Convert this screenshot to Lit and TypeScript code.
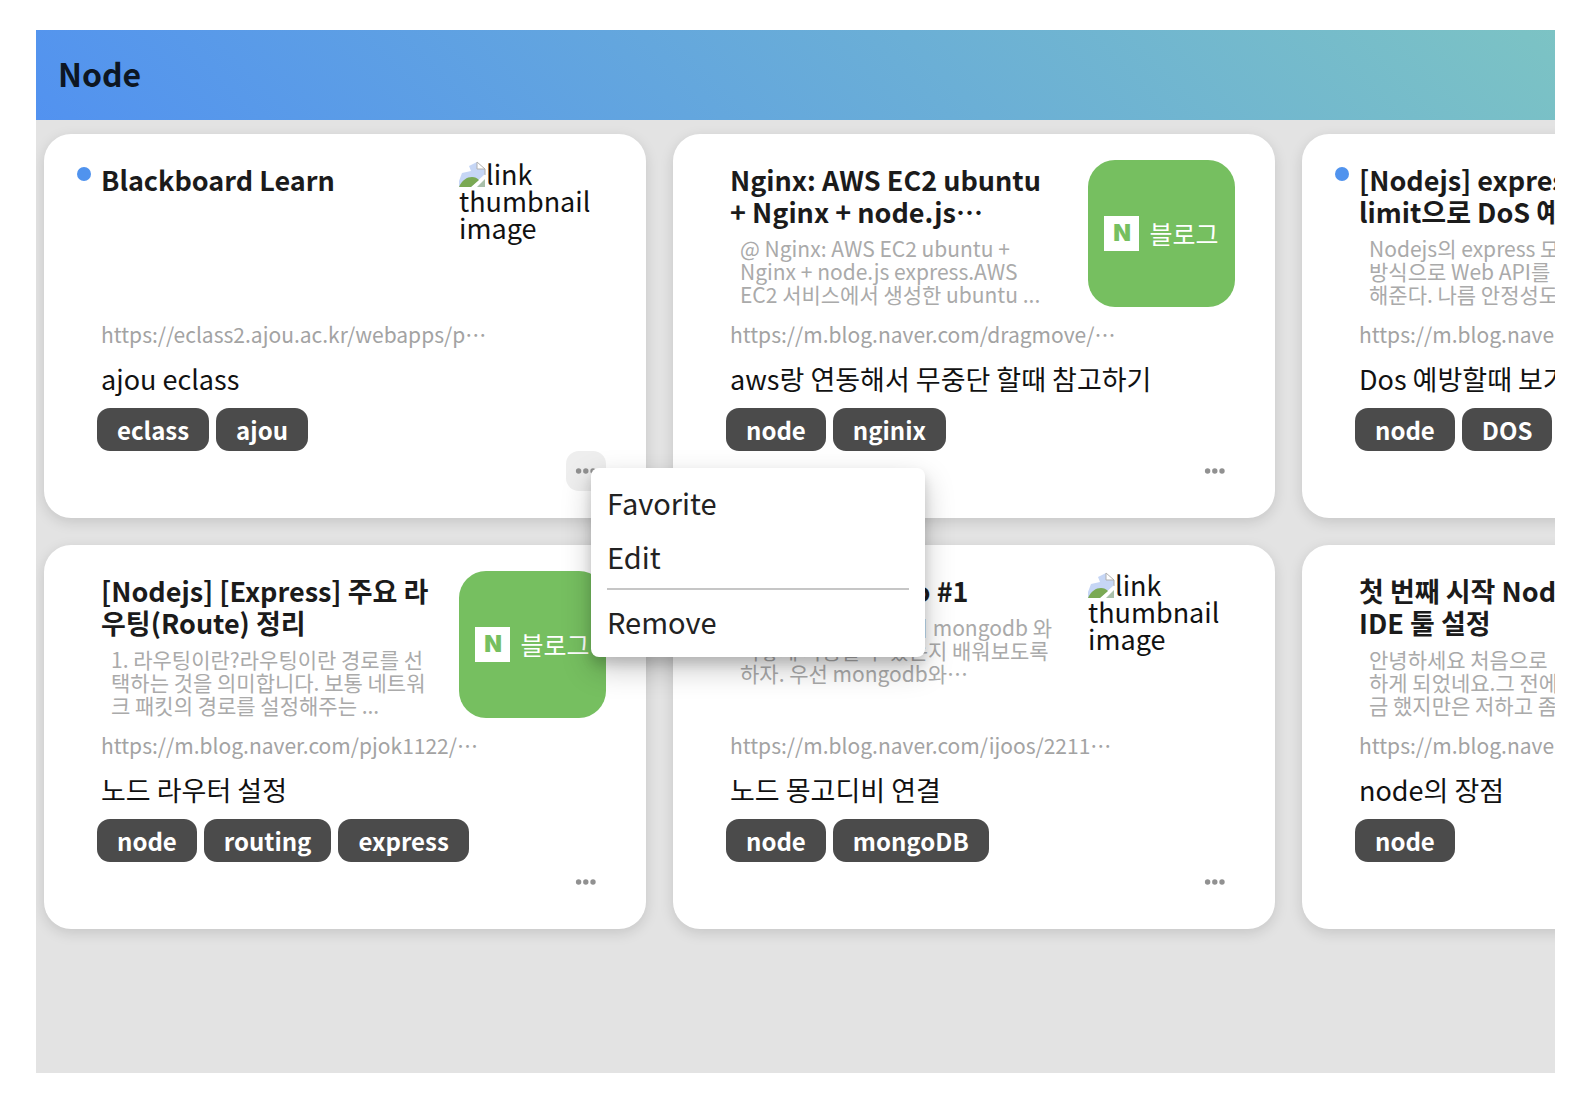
import { LitElement, html, css, svg, nothing } from "lit";
import { customElement, property, state } from "lit/decorators.js";

interface LinkItem {
  unread?: boolean;
  title: string[];
  description: string[];
  url: string;
  memo: string;
  tags: string[];
  blogThumbnail?: boolean;
}

const LINKS: LinkItem[] = [
  {
    unread: true,
    title: ["Blackboard Learn"],
    description: [],
    url: "https://eclass2.ajou.ac.kr/webapps/p…",
    memo: "ajou eclass",
    tags: ["eclass", "ajou"],
  },
  {
    title: ["Nginx: AWS EC2 ubuntu", "+ Nginx + node.js…"],
    description: ["@ Nginx: AWS EC2 ubuntu +", "Nginx + node.js express.AWS", "EC2 서비스에서 생성한 ubuntu ..."],
    url: "https://m.blog.naver.com/dragmove/…",
    memo: "aws랑 연동해서 무중단 할때 참고하기",
    tags: ["node", "nginix"],
    blogThumbnail: true,
  },
  {
    unread: true,
    title: ["[Nodejs] express", "limit으로 DoS 예방"],
    description: ["Nodejs의 express 모듈", "방식으로 Web API를", "해준다. 나름 안정성도"],
    url: "https://m.blog.naver.com/",
    memo: "Dos 예방할때 보기",
    tags: ["node", "DOS"],
    blogThumbnail: true,
  },
  {
    title: ["[Nodejs] [Express] 주요 라", "우팅(Route) 정리"],
    description: ["1. 라우팅이란?라우팅이란 경로를 선", "택하는 것을 의미합니다. 보통 네트워", "크 패킷의 경로를 설정해주는 ..."],
    url: "https://m.blog.naver.com/pjok1122/…",
    memo: "노드 라우터 설정",
    tags: ["node", "routing", "express"],
    blogThumbnail: true,
  },
  {
    title: ["Node.js mongo #1"],
    description: ["이번 글에서는 또 다시 mongodb 와", "어떻게 사용할 수 있는지 배워보도록", "하자. 우선 mongodb와…"],
    url: "https://m.blog.naver.com/ijoos/2211…",
    memo: "노드 몽고디비 연결",
    tags: ["node", "mongoDB"],
  },
  {
    title: ["첫 번째 시작 Node", "IDE 툴 설정"],
    description: ["안녕하세요 처음으로", "하게 되었네요.그 전에", "금 했지만은 저하고 좀"],
    url: "https://m.blog.naver.com/",
    memo: "node의 장점",
    tags: ["node"],
    blogThumbnail: true,
  },
];

const missingImageIcon = svg`
  <path d="M0 26 V20 L3 12 L12 10 L10 5 L18 1 V7 H26 V13 L12 26 Z" fill="#c6d6f5"/>
  <path d="M0 26 C3 19 8 16 13 16 C16 16 18 17 20 19 L12 26 Z" fill="#7aa953"/>
  <path d="M18 26 L26 18 V26 Z" fill="#a9bfa9"/>
  <path d="M18 1 L26 8 H18 Z" fill="#fff" stroke="#b0b0b0" stroke-width="1"/>
  <path d="M26 8 V14" stroke="#b0b0b0" stroke-width="1" fill="none"/>
`;

// The ellipsis is shaped apart from Latin text so that the Korean, centred form is used.
const withEllipsis = (text: string) =>
  text.endsWith("…") ? html`${text.slice(0, -1)}<span class="ellipsis" lang="ko">…</span>` : text;

@customElement("link-card")
export class LinkCard extends LitElement {
  @property({ attribute: false }) item!: LinkItem;
  @property({ type: Boolean }) menuOpen = false;

  static styles = css`
    :host {
      display: block;
      position: relative;
    }
    .card {
      box-sizing: border-box;
      padding: 26px 40px 27px 57px;
      border-radius: 27px;
      background: #fff;
      box-shadow: 0 4px 14px rgba(0, 0, 0, 0.13);
      color: #1b1b1b;
    }
    .head {
      display: flex;
      justify-content: space-between;
      min-height: 148px;
    }
    .copy {
      padding-top: 4px;
      white-space: nowrap;
    }
    .ellipsis {
      display: inline-block;
    }
    .unread {
      position: absolute;
      left: 33px;
      top: 33px;
      width: 14px;
      height: 14px;
      border-radius: 50%;
      background: #5093ee;
    }
    .title {
      margin: 0;
      font-size: 27px;
      line-height: 32px;
      font-weight: 700;
    }
    .line {
      display: block;
    }
    .description {
      margin: 9px 0 0;
      padding-left: 10px;
      font-size: 21px;
      line-height: 23px;
      color: #aaa;
    }
    .thumb {
      flex: none;
      box-sizing: border-box;
      width: 147px;
      height: 147px;
    }
    .blog {
      display: flex;
      align-items: center;
      justify-content: center;
      gap: 10px;
      border-radius: 27px;
      background: #76bf60;
      color: #fff;
      font-size: 25px;
      line-height: 35px;
    }
    .mark {
      width: 35px;
      height: 35px;
      background: #fff;
      color: #76bf60;
      font-family: Inter, sans-serif;
      font-weight: 900;
      font-size: 23px;
      text-align: center;
    }
    .missing {
      font-size: 27px;
      line-height: 27px;
      color: #111;
    }
    .missing svg {
      width: 27px;
      height: 27px;
      margin-bottom: -3px;
      vertical-align: baseline;
    }
    .url {
      display: block;
      margin-top: 14px;
      font-size: 21px;
      line-height: 24px;
      color: #a3a3a3;
      text-decoration: none;
      white-space: nowrap;
    }
    .memo {
      margin: 17px 0 13px;
      font-size: 27px;
      line-height: 32px;
      color: #111;
      white-space: nowrap;
    }
    .tags {
      display: flex;
      gap: 7px;
      margin: 0 0 0 -4px;
      padding: 0;
      list-style: none;
    }
    .tag {
      padding: 0 20px;
      border-radius: 13px;
      background: #4b4b4b;
      color: #fff;
      font-size: 24px;
      line-height: 43px;
      font-weight: 700;
    }
    .actions {
      display: flex;
      justify-content: flex-end;
    }
    .more {
      display: flex;
      align-items: center;
      justify-content: center;
      width: 40px;
      height: 40px;
      padding: 0;
      border: 0;
      border-radius: 13px;
      background: transparent;
      color: #919191;
    }
    .more.active {
      background: #eee;
    }
    .menu {
      position: absolute;
      z-index: 1;
      left: 547px;
      top: 334px;
      box-sizing: border-box;
      width: 334px;
      padding: 7px 0 9px;
      border-radius: 8px;
      background: #fff;
      box-shadow:
        0 7px 11px rgba(0, 0, 0, 0.13),
        0 12px 30px rgba(0, 0, 0, 0.22);
    }
    .entry {
      display: block;
      width: 100%;
      padding: 0 16px;
      border: 0;
      background: none;
      font: inherit;
      font-size: 29px;
      line-height: 54px;
      color: #222;
      text-align: left;
    }
    .rule {
      height: 2px;
      margin: 5px 16px 4px;
      border: 0;
      background: #c6c6c6;
    }
  `;

  private toggleMenu() {
    this.dispatchEvent(new CustomEvent("menu-toggle", { bubbles: true, composed: true }));
  }

  private lines(text: string[]) {
    return text.map((t) => html`<span class="line">${withEllipsis(t)}</span>`);
  }

  private thumbnail() {
    if (this.item.blogThumbnail) {
      return html`<div class="thumb blog"><span class="mark">N</span><span>블로그</span></div>`;
    }
    return html`<div class="thumb missing"><svg viewBox="0 0 27 27" aria-hidden="true">${missingImageIcon}</svg>link thumbnail image</div>`;
  }

  render() {
    const { item } = this;
    return html`
      <article class="card">
        ${item.unread ? html`<span class="unread"></span>` : nothing}
        <div class="head">
          <div class="copy">
            <h2 class="title">${this.lines(item.title)}</h2>
            ${item.description.length
              ? html`<p class="description">${this.lines(item.description)}</p>`
              : nothing}
          </div>
          ${this.thumbnail()}
        </div>
        <a class="url" href="#">${withEllipsis(item.url)}</a>
        <p class="memo">${item.memo}</p>
        <ul class="tags">
          ${item.tags.map((tag) => html`<li class="tag">${tag}</li>`)}
        </ul>
        <div class="actions">
          <button class="more ${this.menuOpen ? "active" : ""}" aria-label="More" @click=${this.toggleMenu}>
            <svg width="22" height="6" viewBox="0 0 22 6" fill="currentColor" aria-hidden="true">
              <circle cx="3.6" cy="3" r="2.7" />
              <circle cx="10.8" cy="3" r="2.7" />
              <circle cx="18" cy="3" r="2.7" />
            </svg>
          </button>
        </div>
      </article>
      ${this.menuOpen
        ? html`<div class="menu" role="menu">
            <button class="entry" role="menuitem">Favorite</button>
            <button class="entry" role="menuitem">Edit</button>
            <hr class="rule" />
            <button class="entry" role="menuitem">Remove</button>
          </div>`
        : nothing}
    `;
  }
}

@customElement("app-root")
export class AppRoot extends LitElement {
  @state() private openIndex = 0;

  static styles = css`
    :host {
      display: block;
      box-sizing: border-box;
      min-height: 100vh;
      padding: 30px 35px 45px 36px;
      background: #fff;
      font-family: "Noto Sans CJK KR", "Noto Sans", sans-serif;
    }
    .board {
      min-height: calc(100vh - 75px);
      overflow: hidden;
      background: #e3e3e3;
    }
    .bar {
      padding: 20px 22px 23px;
      background: linear-gradient(45deg, #5292f0, #7cc3c4);
    }
    .heading {
      margin: 0;
      font-size: 32px;
      line-height: 47px;
      font-weight: 700;
      color: #0d1622;
    }
    .cards {
      display: grid;
      grid-template-columns: repeat(3, 602px);
      gap: 27px;
      padding: 14px 8px;
    }
    .raised {
      z-index: 1;
    }
  `;

  private toggle(index: number) {
    this.openIndex = this.openIndex === index ? -1 : index;
  }

  render() {
    return html`
      <main class="board">
        <header class="bar"><h1 class="heading">Node</h1></header>
        <section class="cards">
          ${LINKS.map(
            (item, i) => html`<link-card
              class=${i === this.openIndex ? "raised" : ""}
              .item=${item}
              .menuOpen=${i === this.openIndex}
              @menu-toggle=${() => this.toggle(i)}
            ></link-card>`,
          )}
        </section>
      </main>
    `;
  }
}
